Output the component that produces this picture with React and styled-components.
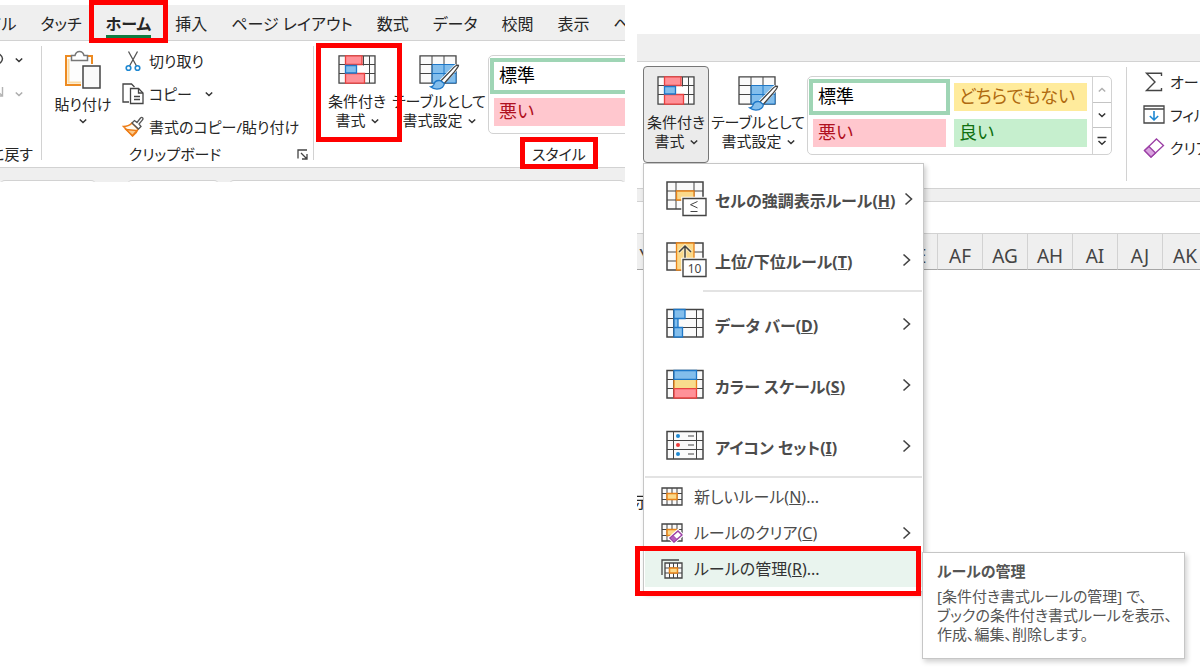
import React from 'react'
import styled, { createGlobalStyle, css } from 'styled-components'

const GlobalStyle = createGlobalStyle`
  * {
    box-sizing: border-box;
  }

  body {
    margin: 0;
    background: #ffffff;
    color: #262626;
    font-family: 'Noto Sans', 'Noto Sans CJK JP', sans-serif;
    font-size: 15px;
    font-feature-settings: 'palt';
  }

  button {
    padding: 0;
    border: 0;
    background: none;
    color: inherit;
    font: inherit;
    white-space: nowrap;
  }

  svg {
    display: block;
    flex: none;
  }
`

const Page = styled.main`
  display: flex;
  gap: 12px;
  min-height: 100vh;
  overflow: hidden;
`

const HomePanel = styled.section`
  flex: 625 1 0;
  min-width: 0;
  padding-top: 5px;
  overflow: hidden;
`

const MenuPanel = styled.section`
  flex: 563 1 0;
  min-width: 0;
  padding-top: 34px;
`

const TabBar = styled.nav`
  display: flex;
  height: ${props => props.$short ? '28px' : '36px'};
  background: #efefef;
  border-bottom: 1px solid #d2d2d2;
`

const TabStrip = styled.div`
  display: flex;
  margin-left: -51px;
`

const Tab = styled.button`
  position: relative;
  padding: 0 12px;
  font-size: 16px;
  line-height: 32px;
  font-weight: ${props => props.$active ? 700 : 400};

  span {
    display: block;
    height: 30px;
    border-bottom: 3px solid ${props => props.$active ? '#107c41' : 'transparent'};
  }
`

const Highlight = styled.div`
  position: absolute;
  inset: ${props => props.$inset};
  border: 5px solid #ff0000;
  pointer-events: none;
  z-index: 3;
`

const Ribbon = styled.div`
  display: flex;
  height: 127px;
  padding: 4px 0 4px ${props => props.$start || '0'};
  border-bottom: 1px solid #d2d2d2;
`

const Divider = styled.div`
  flex: none;
  width: 1px;
  margin: 1px 0 3px;
  background: #d2d2d2;
`

const Group = styled.div`
  display: flex;
  flex: none;
  flex-direction: column;
  justify-content: space-between;
  width: ${props => props.$width || 'auto'};
  padding-right: ${props => props.$end || '0'};
`

const GroupRow = styled.div`
  display: flex;
  align-items: flex-start;
  gap: ${props => props.$gap || '0'};
  padding-left: ${props => props.$indent || '0'};
`

const GroupLabel = styled.div`
  position: relative;
  align-self: ${props => props.$align || 'center'};
  padding-right: ${props => props.$end || '0'};
  line-height: 18px;
  white-space: nowrap;
`

const ClipboardFooter = styled.div`
  display: grid;
  grid-template-columns: 1fr auto 1fr;
  align-items: center;
  padding: 0 5px 0 0;

  button {
    justify-self: end;
  }
`

const UndoStack = styled.div`
  display: flex;
  flex-direction: column;
  align-items: flex-end;
  gap: 17px;
  padding: 6px 18px 0 0;
`

const UndoButton = styled.button`
  display: flex;
  align-items: center;
  gap: 11px;
  opacity: ${props => props.$faded ? 0.4 : 1};
`

const LargeButton = styled.button`
  display: flex;
  flex-direction: column;
  align-items: center;
  gap: 8px;
  height: 97px;
  width: ${props => props.$width};
  padding-top: 9px;
  border: 1px solid transparent;
  border-radius: 4px;
  line-height: 19px;

  > svg {
    overflow: visible;
  }

  ${props => props.$open && css`
    border-color: #777777;
    background: #ebebeb;
  `}
`

const LabelLine = styled.span`
  display: flex;
  align-items: center;
  justify-content: center;
  gap: 5px;
`

const PasteButton = styled.button`
  display: flex;
  flex-direction: column;
  align-items: center;
  gap: 3px;
  width: 66px;
  padding-top: 5px;
  line-height: 22px;
`

const SmallButtons = styled.div`
  display: flex;
  flex-direction: column;
  margin-top: -1px;
`

const SmallButton = styled.button`
  display: flex;
  align-items: center;
  gap: 5px;
  height: 33px;
  line-height: 20px;

  > svg:last-child:not(:first-child) {
    margin-left: 8px;
  }
`

const Anchor = styled.div`
  position: relative;
`

const Gallery = styled.div`
  display: flex;
  flex: none;
  height: 79px;
  margin-top: 10px;
  border: 1px solid #d2d2d2;
  border-radius: 5px;
`

const Swatches = styled.div`
  display: grid;
  grid-template-columns: 141px 141px;
  grid-auto-rows: 36px;
  padding: 2px 1px;
`

const Swatch = styled.button`
  padding: 0 0 2px 5px;
  border: 4px solid ${props => props.$selected ? '#9fd5b5' : 'transparent'};
  background: ${props => props.$bg} padding-box;
  color: ${props => props.$color};
  font-size: 18px;
  line-height: 24px;
  text-align: left;
`

const GalleryArrows = styled.div`
  display: grid;
  grid-template-rows: 25px 25px 1fr;
  width: 19px;
  border-left: 1px solid #d2d2d2;

  button {
    display: grid;
    place-items: center;
  }

  button + button {
    border-top: 1px solid #c4c4c4;
  }
`

const FormulaStrip = styled.div`
  display: flex;
  gap: 10px;
  height: 14px;
  padding-top: 12px;
  background: #efefef;
  overflow: hidden;
`

const StripBox = styled.div`
  flex: ${props => props.$grow ? '1' : `0 0 ${props.$width}`};
  height: 8px;
  margin-right: ${props => props.$end || '0'};
  border: 1px solid #d2d2d2;
  border-width: 1px 0;
  border-radius: 5px 5px 0 0;
  background: #ffffff;
`

const FormulaBar = styled.div`
  height: 45px;
  border-top: 12px solid #efefef;
  border-bottom: 1px solid #d2d2d2;
  box-shadow: inset 0 1px #d2d2d2;
`

const SheetClip = styled.div`
  overflow: hidden;
`

const Sheet = styled.table`
  width: 630px;
  margin-left: -14px;
  table-layout: fixed;
  border-collapse: separate;
  border-spacing: 0;

  th {
    height: 36px;
    padding: 9px 0 0;
    border-right: 1px solid #d2d2d2;
    border-bottom: 1px solid #a6a6a6;
    background: #efefef;
    color: #444444;
    font-size: 19px;
    font-weight: 400;
    line-height: 26px;
  }

  td {
    height: 244px;
    padding: 0 0 0 11px;
    vertical-align: bottom;
    font-size: 16px;
    line-height: 24px;
  }
`

const Menu = styled.div`
  position: absolute;
  top: 97px;
  left: 0;
  z-index: 2;
  width: 281px;
  padding: 4px 1px;
  border: 1px solid #c6c6c6;
  background: #ffffff;
  box-shadow: 2px 3px 5px rgba(0, 0, 0, 0.2);
`

const MenuRow = styled.div`
  position: relative;
`

const MenuItem = styled.button`
  display: flex;
  align-items: center;
  width: 100%;
  height: ${props => props.$large ? '61px' : '36px'};
  padding: ${props => props.$large ? '0 10px 0 21px' : '0 10px 0 16px'};
  gap: ${props => props.$large ? '8px' : '11px'};
  background: ${props => props.$active ? '#e9f4ee' : 'transparent'};
  color: ${props => props.$active ? '#333333' : '#4c4c4c'};
  font-size: 16px;
  font-weight: ${props => props.$large ? 700 : 400};
  line-height: 24px;
  text-align: left;

  span {
    flex: 1;
    padding-top: ${props => props.$large ? '4px' : '0'};
  }
`

const Rule = styled.div`
  height: 2px;
  margin: 0 0 1px ${props => props.$indent};
  background: #e3e3e3;
`

const Tooltip = styled.div`
  position: absolute;
  top: 1px;
  left: 277px;
  z-index: 4;
  width: 263px;
  height: 107px;
  padding: 8px 14px;
  border: 1px solid #c6c6c6;
  background: #ffffff;
  box-shadow: 2px 3px 5px rgba(0, 0, 0, 0.18);
  color: #555555;
  white-space: nowrap;

  h2 {
    margin: 0 0 6px;
    font-size: 15px;
    line-height: 20px;
  }

  p {
    margin: 0;
    font-size: 15px;
    line-height: 19px;
  }
`

const Chevron = ({ dir = 'down', color = '#333333' }) => {
  if (dir === 'right') {
    return (
      <svg width="10" height="14" fill="none" stroke="#444444" strokeWidth="1.6">
        <path d="M1.5 1.5 7.5 7 1.5 12.5" />
      </svg>
    )
  }
  return (
    <svg width="8" height="6" fill="none" stroke={color} strokeWidth="1.5">
      <path d={dir === 'up' ? 'M.8 4.5 4 1.5l3.2 3' : 'M.8 1.5 4 4.5l3.2-3'} />
    </svg>
  )
}

const MoreIcon = () => (
  <svg width="10" height="10" fill="none" stroke="#333333" strokeWidth="1.5">
    <path d="M.5 1.5h9M1.5 5 5 8.2 8.5 5" />
  </svg>
)

const ConditionalIcon = () => (
  <svg width="38" height="29" fill="none" stroke="#444444">
    <path fill="#fafafa" strokeWidth="1.3" d="M1 .8h36v27.4H1z" />
    <path d="M1 9.5h36M1 18.5h36M7.500 1v27M25.500 1v27M31.500 1v27" />
    <path fill="#ffffff" stroke="none" d="M18 10.500h13v7.500H18z" />
    <path fill="#ff9198" stroke="#e8403f" strokeWidth="1.3" d="M7.500.8h16.500v8.700H7.500zM7.500 18.500h19v9.700h-19z" />
    <path fill="#83beec" stroke="#1e78c8" strokeWidth="1.3" d="M7.500 10.500h11v7.500h-11z" />
  </svg>
)

const TableIcon = () => (
  <svg width="40" height="29" fill="none" stroke="#444444">
    <path fill="#fafafa" strokeWidth="1.3" d="M1 .8h36v27.4H1z" />
    <path fill="#83beec" stroke="none" d="M13 10h24v18H13z" />
    <path d="M1 9.500h12M1 18.500h12M13 1v27M25 1v9" />
    <path stroke="#1e78c8" d="M13 9.500h24M13 18.500h24M13 10v18M25 10v18M37 10v18H13" />
    <path stroke="#ffffff" strokeWidth="6" d="M38.500 11 22 28q-3 5-9 5" />
    <path fill="#ffffff" strokeWidth="1.3" d="M39.500 10.300c-1.500-.5-4 1.200-7 4.600L21.800 26l3.200 2.800 9.600-11c3-3.600 5-6.300 4.900-7.500z" />
    <path fill="#83beec" stroke="#1e78c8" strokeWidth="1.3" d="M21.500 25.700c-3.300-.6-5.800.9-6.500 3.500-.5 1.600-1.400 2.300-3.500 2.600 3.500 3 9.400 2.800 12 .4 1.700-1.500 2-2.700 1.500-4z" />
  </svg>
)

const PasteIcon = () => (
  <svg width="38" height="40" fill="none" strokeWidth="1.5">
    <path fill="#fdfdfd" stroke="#ed8b22" strokeWidth="2" d="M2 6h26v29H2z" />
    <path stroke="#fbdca6" strokeWidth="2" d="M4.500 9v23.500H18" />
    <path fill="#ffffff" stroke="#777777" d="M7.500 10.500V5.500H11q1-4 4.500-4T20 5.500h3.500v5z" />
    <path fill="#ffffff" stroke="#ffffff" strokeWidth="4" d="M19 16h17v22H19z" />
    <path fill="#fafafa" stroke="#444444" d="M19 16h17v22H19z" />
  </svg>
)

const CutIcon = () => (
  <svg width="22" height="22" fill="none" strokeWidth="1.3">
    <path stroke="#555555" d="M6.500 1.500 14.500 16M15.500 1.500 7.500 16" />
    <circle cx="6.500" cy="18" r="2.300" stroke="#1e88d2" strokeWidth="1.6" />
    <circle cx="15.500" cy="18" r="2.300" stroke="#1e88d2" strokeWidth="1.6" />
  </svg>
)

const CopyIcon = () => (
  <svg width="22" height="22" fill="none" stroke="#444444" strokeWidth="1.3">
    <path d="M7 19H1V1h8.500l3 3" />
    <path fill="#ffffff" d="M8.500 5.500h8l4.500 4.500v10.500H8.500z" />
    <path d="M16.500 5.500V10H21M12 13.500h6M12 16.500h6" />
  </svg>
)

const BrushIcon = () => (
  <svg width="22" height="22" fill="none" strokeWidth="1.3">
    <path fill="#fffaf0" stroke="#ed7d18" strokeWidth="1.6" d="M1.500 10.500q5 0 8.500-3.500l6 6q-1.500 4.500-5.500 7z" />
    <path fill="#fbc98a" stroke="#ed7d18" d="m4 13.500 11 1-4.500 5z" />
    <path fill="#ffffff" stroke="#555555" d="m10 7 2.500-2.500 2.500 2 3.500-4.500c1.500-1.500 3.300.2 2 1.800L17 8l2 2.500-2.500 2.500z" />
  </svg>
)

const UndoIcon = () => (
  <svg width="16" height="17" fill="none" stroke="#444444" strokeWidth="1.4">
    <path d="M2 1v6h6M2 7q5-5.500 10-3.500 4 3 1.500 7L8 16" />
  </svg>
)

const RedoIcon = () => (
  <svg width="16" height="17" fill="none" stroke="#444444" strokeWidth="1.4">
    <path d="M14.500 2v9h-8M14 10.500 5 2" />
  </svg>
)

const LauncherIcon = () => (
  <svg width="11" height="11" fill="none" stroke="#444444" strokeWidth="1.3">
    <path d="M1 9.500V1h9M4 4l5.500 5.500M10 5v5H5" />
  </svg>
)

const SumIcon = () => (
  <svg width="22" height="20" fill="none" stroke="#444444" strokeWidth="1.4">
    <path d="M18.500 4V1.200H3.500L12 10l-8.500 8.500h15V16" />
  </svg>
)

const FillIcon = () => (
  <svg width="22" height="19" fill="none" stroke="#444444" strokeWidth="1.3">
    <path d="M1 1h20v17H1zM1 4h20" />
    <path stroke="#1e88d2" strokeWidth="1.6" d="M11 6v9M6.800 11l4.200 4 4.200-4" />
  </svg>
)

const EraserIcon = () => (
  <svg width="22" height="20" fill="none" stroke="#9b3fa5" strokeWidth="1.3">
    <path fill="#ffffff" d="M13.500 1 20.500 7.500 8 19 1.500 12.500z" />
    <path fill="#d9a3df" d="M6 8.500 12.500 15 8 19l-6.500-6.500z" />
  </svg>
)

const Frame = ({ children, lines }) => (
  <svg width="41" height="37" fill="none" stroke="#444444">
    <path fill="#fafafa" strokeWidth="1.5" d="M1 4.500h36v27.500H1z" />
    <path d={lines} />
    {children}
  </svg>
)

const HighlightIcon = () => (
  <svg width="41" height="36" fill="none" stroke="#444444">
    <path fill="#fafafa" strokeWidth="1.5" d="M1 1h36v27H1z" />
    <path d="M1 10h36M1 19h36M10 1v27M28 1v27" />
    <path fill="#fbd98a" stroke="#e8831a" strokeWidth="1.3" d="M10.500 10H28v9H10.500z" />
    <path fill="#ffffff" stroke="#ffffff" strokeWidth="3.5" d="M17 17.500h23v17H17z" />
    <path fill="#ffffff" strokeWidth="1.4" d="M17 17.500h23v17H17z" />
    <path d="m31.500 20.500-7 3.200 7 3.200M24.500 30.500h7" />
  </svg>
)

const TopIcon = () => (
  <svg width="41" height="36" fill="none" stroke="#444444">
    <path fill="#fafafa" strokeWidth="1.5" d="M1 1h36v27H1z" />
    <path d="M1 10h36M1 19h36" />
    <path fill="#fbd98a" stroke="#e8831a" strokeWidth="1.3" d="M10.500 1H28v27H10.500z" />
    <path stroke="#fbe9bd" strokeWidth="3.5" d="M19 4v14M13 10l6-6 6 6" />
    <path strokeWidth="1.5" d="M19 4v14M13 10l6-6 6 6" />
    <path fill="#ffffff" stroke="#ffffff" strokeWidth="3.5" d="M17 17.500h23v17H17z" />
    <path fill="#ffffff" strokeWidth="1.4" d="M17 17.500h23v17H17z" />
    <text x="28.500" y="31" fill="#444444" stroke="none" fontSize="12" fontWeight="400" textAnchor="middle">10</text>
  </svg>
)

const DataBarIcon = () => (
  <Frame lines="M1 13.500h36M1 22.500h36M7.500 5v27M30.500 5v27">
    <path fill="#83beec" stroke="#1e78c8" strokeWidth="1.3" d="M8 4.500h11v9H8zM8 13.500h4v9H8zM8 22.500h8.500V32H8z" />
  </Frame>
)

const ColorScaleIcon = () => (
  <Frame lines="M1 13.500h36M1 22.500h36M7.500 5v27M30.500 5v27">
    <path fill="#83beec" stroke="#1e78c8" strokeWidth="1.3" d="M8 4.500h22.500v9H8z" />
    <path fill="#ff9198" stroke="#e8403f" strokeWidth="1.3" d="M8 22.500h22.500V32H8z" />
    <path fill="#f8dc8c" stroke="none" d="M8 14h22.500v8H8z" />
    <path stroke="#e8831a" strokeWidth="1.3" d="M8 14v8.500M30.500 14v8.500" />
  </Frame>
)

const IconSetIcon = () => (
  <Frame lines="M1 13.500h36M1 22.500h36M7.500 5v27M30.500 5v27M22 9h6M22 18h6M22 27h6">
    <circle cx="12" cy="9" r="2" fill="#1e88d2" stroke="none" />
    <circle cx="12" cy="18" r="2" fill="#ee3a3a" stroke="none" />
    <circle cx="12" cy="27" r="2" fill="#1e88d2" stroke="none" />
  </Frame>
)

const NewRuleIcon = ({ eraser }) => (
  <svg width="22" height="20" fill="none" stroke="#444444">
    <path fill="#fafafa" strokeWidth="1.3" d="M1 1h20v17H1z" />
    <path d="M1 6.500h20M1 12.500h20M6 1v17M16 1v17M11 1v5M11 13v5" />
    <path fill="#fbd98a" stroke="#e8831a" strokeWidth="1.5" d="M6 6.500h10v6H6z" />
    {eraser && (
      <g>
        <path fill="#ffffff" stroke="#ffffff" strokeWidth="3.5" d="m17 8 4 4-8 7-4-4z" />
        <path fill="#ffffff" stroke="#9b3fa5" strokeWidth="1.5" d="m17 8 4 4-8 7-4-4z" />
        <path fill="#b45fbe" stroke="#9b3fa5" d="m12 12.500 4 4-3 2.500-4-4z" />
      </g>
    )}
  </svg>
)

const ManageIcon = () => (
  <svg width="22" height="20" fill="none" stroke="#444444">
    <path strokeWidth="1.3" d="M1 16V1h17" />
    <path fill="#fafafa" strokeWidth="1.3" d="M4 4h17v15H4z" />
    <path d="M4 9h17M4 14h17M8.500 4v15M16.500 4v15M12.500 4v15" />
    <path fill="#fbd98a" stroke="#e8831a" strokeWidth="1.5" d="M8.500 9h8v5h-8z" />
  </svg>
)

const tabs = ['ファイル', 'タッチ', 'ホーム', '挿入', 'ページ レイアウト', '数式', 'データ', '校閲', '表示', 'ヘルプ']

const menuItems = [
  { name: 'セルの強調表示ルール', letter: 'H', icon: <HighlightIcon />, large: true, more: true },
  { name: '上位/下位ルール', letter: 'T', icon: <TopIcon />, large: true, more: true },
  { rule: '58px' },
  { name: 'データ バー', letter: 'D', icon: <DataBarIcon />, large: true, more: true },
  { name: 'カラー スケール', letter: 'S', icon: <ColorScaleIcon />, large: true, more: true },
  { name: 'アイコン セット', letter: 'I', icon: <IconSetIcon />, large: true, more: true },
  { rule: '0' },
  { name: '新しいルール', letter: 'N', icon: <NewRuleIcon />, dots: true },
  { name: 'ルールのクリア', letter: 'C', icon: <NewRuleIcon eraser />, more: true },
  { name: 'ルールの管理', letter: 'R', icon: <ManageIcon />, dots: true, active: true }
]

const columns = ['Y', 'Z', 'AA', 'AB', 'AC', 'AD', 'AE', 'AF', 'AG', 'AH', 'AI', 'AJ', 'AK', 'AL']

const ConditionalButton = ({ open }) => (
  <LargeButton $width="66px" $open={open} aria-expanded={!!open}>
    <ConditionalIcon />
    <span>
      <LabelLine>条件付き</LabelLine>
      <LabelLine>書式 <Chevron /></LabelLine>
    </span>
  </LargeButton>
)

const TableButton = () => (
  <LargeButton $width="98px">
    <TableIcon />
    <span>
      <LabelLine>テーブルとして</LabelLine>
      <LabelLine>書式設定 <Chevron /></LabelLine>
    </span>
  </LargeButton>
)

const StyleGallery = () => (
  <Gallery>
    <Swatches>
      <Swatch $bg="#ffffff" $color="#000000" $selected>標準</Swatch>
      <Swatch $bg="#ffeb9c" $color="#b06a10">どちらでもない</Swatch>
      <Swatch $bg="#ffc7ce" $color="#b01020">悪い</Swatch>
      <Swatch $bg="#c6efce" $color="#107010">良い</Swatch>
    </Swatches>
    <GalleryArrows>
      <button aria-label="上へ"><Chevron dir="up" color="#b0b0b0" /></button>
      <button aria-label="下へ"><Chevron /></button>
      <button aria-label="その他"><MoreIcon /></button>
    </GalleryArrows>
  </Gallery>
)

const FormatMenu = () => (
  <Menu role="menu">
    {menuItems.map((item, index) => item.rule ? <Rule key={index} $indent={item.rule} /> : (
      <MenuRow key={index}>
        <MenuItem role="menuitem" $large={item.large} $active={item.active}>
          {item.icon}
          <span>{item.name}(<u>{item.letter}</u>){item.dots && '...'}</span>
          {item.more && <Chevron dir="right" />}
        </MenuItem>
        {item.active && (
          <>
            <Highlight $inset="-5px 1px -9px -10px" />
            <Tooltip role="tooltip">
              <h2>ルールの管理</h2>
              <p>
                [条件付き書式ルールの管理] で、<br />
                ブックの条件付き書式ルールを表示、<br />
                作成、編集、削除します。
              </p>
            </Tooltip>
          </>
        )}
      </MenuRow>
    ))}
  </Menu>
)

const App = () => (
  <Page>
    <GlobalStyle />
    <HomePanel>
      <TabBar>
        <TabStrip>
          {tabs.map(tab => (
            <Tab key={tab} $active={tab === 'ホーム'}>
              <span>{tab}</span>
              {tab === 'ホーム' && <Highlight $inset="-5px -5px -3px -5px" />}
            </Tab>
          ))}
        </TabStrip>
      </TabBar>
      <Ribbon>
        <Group $width="41px">
          <UndoStack>
            <UndoButton aria-label="元に戻す"><UndoIcon /><Chevron /></UndoButton>
            <UndoButton aria-label="やり直し" $faded><RedoIcon /><Chevron /></UndoButton>
          </UndoStack>
          <GroupLabel $align="flex-end" $end="8px">元に戻す</GroupLabel>
        </Group>
        <Divider />
        <Group $width="271px">
          <GroupRow $indent="8px" $gap="6px">
            <PasteButton>
              <PasteIcon />
              <span>貼り付け</span>
              <Chevron />
            </PasteButton>
            <SmallButtons>
              <SmallButton><CutIcon />切り取り</SmallButton>
              <SmallButton><CopyIcon />コピー<Chevron /></SmallButton>
              <SmallButton><BrushIcon />書式のコピー/貼り付け</SmallButton>
            </SmallButtons>
          </GroupRow>
          <ClipboardFooter>
            <span />
            <GroupLabel>クリップボード</GroupLabel>
            <button aria-label="クリップボードの設定"><LauncherIcon /></button>
          </ClipboardFooter>
        </Group>
        <Divider />
        <Group>
          <GroupRow $indent="10px">
            <Anchor>
              <ConditionalButton />
              <Highlight $inset="-2px -12px 0 -8px" />
            </Anchor>
            <TableButton />
            <StyleGallery />
          </GroupRow>
          <GroupRow $indent="218px">
            <GroupLabel>
              スタイル
              <Highlight $inset="-8px -12px -6px -12px" />
            </GroupLabel>
          </GroupRow>
        </Group>
      </Ribbon>
      <FormulaStrip>
        <StripBox $width="96px" $end="21px" />
        <StripBox $width="92px" />
        <StripBox $grow />
      </FormulaStrip>
    </HomePanel>
    <MenuPanel>
      <TabBar $short />
      <Ribbon $start="6px">
        <Group $end="14px">
          <GroupRow>
            <Anchor>
              <ConditionalButton open />
              <FormatMenu />
            </Anchor>
            <TableButton />
            <StyleGallery />
          </GroupRow>
        </Group>
        <Divider />
        <Group>
          <GroupRow $indent="16px">
            <SmallButtons>
              <SmallButton><SumIcon />オート SUM</SmallButton>
              <SmallButton><FillIcon />フィル</SmallButton>
              <SmallButton><EraserIcon />クリア</SmallButton>
            </SmallButtons>
          </GroupRow>
        </Group>
      </Ribbon>
      <FormulaBar />
      <SheetClip>
        <Sheet>
          <thead>
            <tr>{columns.map(column => <th key={column}>{column}</th>)}</tr>
          </thead>
          <tbody>
            <tr><td colSpan={14}>示</td></tr>
          </tbody>
        </Sheet>
      </SheetClip>
    </MenuPanel>
  </Page>
)

export default App
